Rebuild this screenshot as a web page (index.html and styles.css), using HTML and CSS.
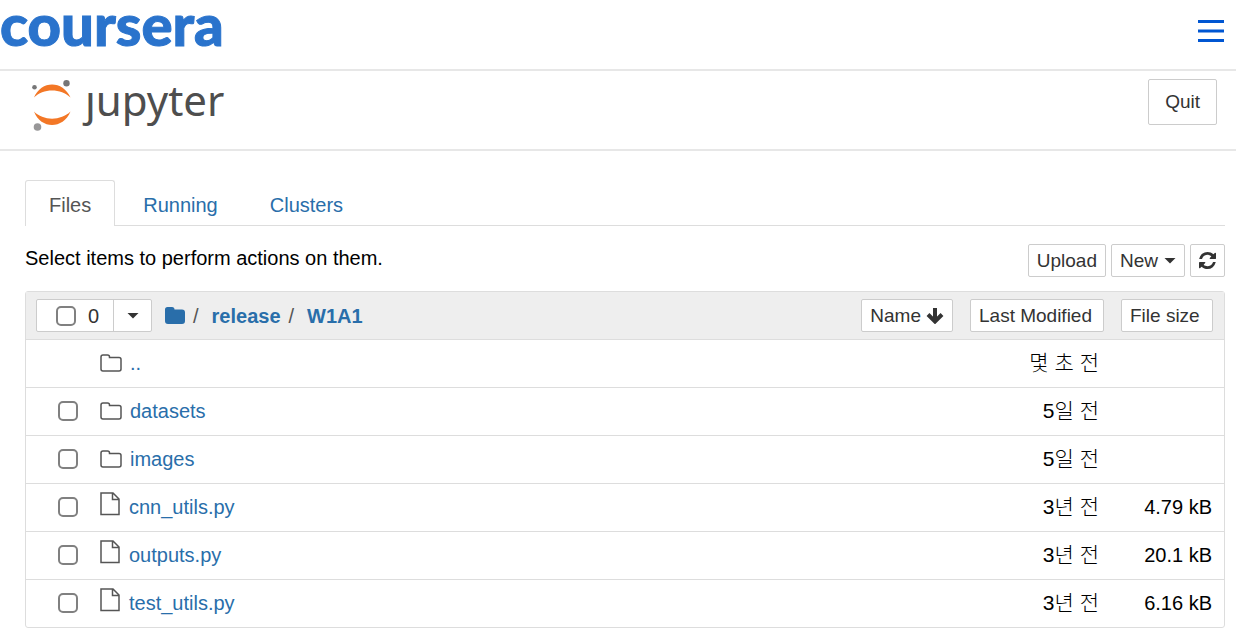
FILE: index.html
```html
<!DOCTYPE html>
<html lang="ko">
<head>
<meta charset="utf-8">
<meta name="viewport" content="width=device-width, initial-scale=1">
<title>Jupyter</title>
<link rel="stylesheet" href="styles.css">
</head>
<body>
<svg class="sprite" aria-hidden="true">
  <symbol id="folder" viewBox="0 0 22 18"><path d="M3 .9h4.500q2 0 2 2v.6H19q2 0 2 2V15q0 2-2 2H3q-2 0-2-2V3q0-2.100 2-2.100z" fill="none" stroke="#555" stroke-width="1.500"/></symbol>
  <symbol id="file" viewBox="0 0 20 24"><path d="M1 1h12l6 6v15.500H1zM12.500 1v6.500H19" fill="none" stroke="#555" stroke-width="1.500"/></symbol>
</svg>
<header class="site-header">
  <div class="coursera">coursera</div>
  <button class="menu" aria-label="Menu"><svg width="26" height="24" viewBox="0 0 26 24"><path d="M0 2.500h26M0 12h26M0 21.500h26" stroke="#0056d2" stroke-width="3"/></svg></button>
</header>
<div class="app-header">
  <div class="jupyter">
    <svg width="40" height="52" viewBox="0 0 40 52" aria-hidden="true">
      <path d="M2 18.500C9 1 31 1 38.500 18.500C29 9 11 9 2 18.500zM2 32.500C11 42 29 42 38.500 32.500C31 50.500 9 50.500 2 32.500z" fill="#f37726"/>
      <circle cx="34.500" cy="4.300" r="3.200" fill="#767677"/><circle cx="2.500" cy="8.300" r="2.300" fill="#767677"/><circle cx="5.500" cy="48" r="3.800" fill="#989798"/>
    </svg>
    <span class="jupyter-name">ȷupyter</span>
  </div>
  <button class="btn quit">Quit</button>
</div>
<main class="content">
  <nav class="tabs">
    <a class="tab active" href="#files">Files</a>
    <a class="tab" href="#running">Running</a>
    <a class="tab" href="#clusters">Clusters</a>
  </nav>
  <div class="toolbar">
    <span>Select items to perform actions on them.</span>
    <div class="actions">
      <button class="btn">Upload</button>
      <button class="btn">New<span class="caret"></span></button>
      <button class="btn" aria-label="Refresh"><svg width="17" height="17" viewBox="0 0 1536 1536" fill="#333"><path d="M1511 928q0 5-1 7-64 268-268 434.500T764 1536q-146 0-282.500-55T238 1324l-129 129q-19 19-45 19t-45-19-19-45V960q0-26 19-45t45-19h448q26 0 45 19t19 45-19 45l-137 137q71 66 161 102t187 36q134 0 250-65t186-179q11-17 53-117 8-23 30-23h192q13 0 22.500 9.500t9.500 22.500zm25-800v448q0 26-19 45t-45 19h-448q-26 0-45-19t-19-45 19-45l138-138Q969 256 768 256q-134 0-250 65T332 500q-11 17-53 117-8 23-30 23H50q-13 0-22.500-9.500T18 608v-7q65-268 270-434.500T768 0q146 0 284 55.500T1297 212l130-129q19-19 45-19t45 19 19 45z"/></svg></button>
    </div>
  </div>
  <table class="files">
    <colgroup><col><col class="col-modified"><col class="col-size"></colgroup>
    <thead>
      <tr>
        <th>
          <div class="head-row">
            <div class="selector">
              <label class="select-all"><input class="check" type="checkbox">0</label>
              <button class="select-menu" aria-label="Select"><span class="caret"></span></button>
            </div>
            <div class="crumbs">
              <a href="#root" aria-label="Root"><svg width="20" height="17" viewBox="0 0 20 17"><path d="M2.500 0H7q2.500 0 2.500 2.500H17q3 0 3 3V14q0 3-3 3H3q-3 0-3-3V2.500Q0 0 2.500 0z" fill="#296eaa"/></svg></a>
              <span class="slash">/</span><a href="#release">release</a><span class="slash">/</span><a href="#w1a1">W1A1</a>
            </div>
            <button class="btn">Name<svg class="arrow" width="18" height="16" viewBox="0 0 18 16"><path d="M9 0v13M2 6.500l7 7 7-7" fill="none" stroke="#333" stroke-width="4"/></svg></button>
          </div>
        </th>
        <th><button class="btn sort-modified">Last Modified</button></th>
        <th><button class="btn sort-size">File size</button></th>
      </tr>
    </thead>
    <tbody>
      <tr><td><div class="item parent"><svg class="icon-folder"><use href="#folder"/></svg><a href="#up">..</a></div></td><td class="modified">몇 초 전</td><td class="size"></td></tr>
      <tr><td><div class="item"><input class="check" type="checkbox" aria-label="datasets"><svg class="icon-folder"><use href="#folder"/></svg><a href="#datasets">datasets</a></div></td><td class="modified">5일 전</td><td class="size"></td></tr>
      <tr><td><div class="item"><input class="check" type="checkbox" aria-label="images"><svg class="icon-folder"><use href="#folder"/></svg><a href="#images">images</a></div></td><td class="modified">5일 전</td><td class="size"></td></tr>
      <tr><td><div class="item"><input class="check" type="checkbox" aria-label="cnn_utils.py"><svg class="icon-file"><use href="#file"/></svg><a href="#cnn">cnn_utils.py</a></div></td><td class="modified">3년 전</td><td class="size">4.79 kB</td></tr>
      <tr><td><div class="item"><input class="check" type="checkbox" aria-label="outputs.py"><svg class="icon-file"><use href="#file"/></svg><a href="#outputs">outputs.py</a></div></td><td class="modified">3년 전</td><td class="size">20.1 kB</td></tr>
      <tr><td><div class="item"><input class="check" type="checkbox" aria-label="test_utils.py"><svg class="icon-file"><use href="#file"/></svg><a href="#test">test_utils.py</a></div></td><td class="modified">3년 전</td><td class="size">6.16 kB</td></tr>
    </tbody>
  </table>
</main>
</body>
</html>
```

FILE: styles.css
```css
* { box-sizing: border-box; }
body {
  margin: 0;
  background: #fff;
  color: #000;
  font: 20px/28px "Liberation Sans", "Noto Sans CJK KR", sans-serif;
}
a { color: #296eaa; text-decoration: none; }
svg { display: block; flex: none; }
button { font: inherit; margin: 0; cursor: pointer; }
.sprite { position: absolute; width: 0; height: 0; }

.site-header, .app-header {
  display: flex;
  align-items: flex-start;
  justify-content: space-between;
  border-bottom: 2px solid #e7e7e7;
}
.site-header { height: 71px; padding: 0 12px 0 0; }
.coursera {
  color: #2a73cc;
  font: 900 58px/48px Lato, sans-serif;
  -webkit-text-stroke: 1px #2a73cc;
}
.menu { margin-top: 19px; border: 0; background: none; padding: 0; }
.app-header { height: 80px; padding: 8px 19px 0 32px; }
.jupyter { display: flex; gap: 13px; }
.jupyter-name {
  color: #4e4e4e;
  font: 42px/42px "Noto Sans", "Open Sans", sans-serif;
}

.btn {
  display: flex;
  align-items: center;
  height: 33px;
  padding: 0 8px;
  border: 1px solid #ccc;
  border-radius: 2px;
  background: #fff;
  color: #333;
  font-size: 19px;
  white-space: nowrap;
}
.quit { height: 46px; padding: 0 16px; }
.caret {
  width: 12px;
  height: 6px;
  margin-left: 6px;
  background: #333;
  clip-path: polygon(0 0, 100% 0, 50% 100%);
}

.content { padding: 29px 11px 0 25px; }
.tabs { display: flex; gap: 4px; border-bottom: 1px solid #ddd; }
.tab {
  height: 46px;
  margin-bottom: -1px;
  padding: 10px 23px;
  border: 1px solid transparent;
  border-bottom: 0;
  border-radius: 3px 3px 0 0;
}
.tab.active { border-color: #ddd; background: #fff; color: #555; }

.toolbar {
  display: flex;
  justify-content: space-between;
  padding: 18px 0 14px;
}
.actions { display: flex; gap: 5px; }

.files {
  width: 100%;
  table-layout: fixed;
  border: 1px solid #ddd;
  border-radius: 3px;
  border-spacing: 0;
}
.col-modified { width: 151px; }
.col-size { width: 120px; }
.files th, .files td { height: 48px; padding: 0; border-bottom: 1px solid #ddd; }
.files td { padding-bottom: 2px; }
.files tbody tr:last-child td { height: 47px; border-bottom: 0; }
.files th { background: #eee; font-weight: normal; }
.head-row { display: flex; align-items: center; padding-left: 10px; }
.sort-modified, .sort-size { margin-left: 17px; }
.sort-modified { width: 134px; }
.sort-size { width: 92px; }
.arrow { margin-left: 5px; }

.selector { display: flex; height: 33px; border: 1px solid #ccc; border-radius: 2px; background: #fff; color: #333; }
.select-all { display: flex; align-items: center; gap: 12px; width: 76px; padding-left: 19px; }
.select-menu { width: 38px; padding: 0 0 0 7px; border: 0; border-left: 1px solid #ccc; background: none; }
.select-menu .caret { display: block; }
.crumbs { display: flex; align-items: center; flex: 1; padding-left: 13px; font-weight: bold; }
.slash { margin: 0 13px 0 8px; color: #555; font-weight: normal; }

.check {
  appearance: none;
  flex: none;
  width: 20px;
  height: 20px;
  margin: 0;
  border: 2px solid #808080;
  border-radius: 5px;
  background: #fff;
}
.item { display: flex; align-items: center; padding-left: 32px; }
.item .check { margin-right: 22px; }
.parent { padding-left: 74px; }
.icon-folder { width: 22px; height: 18px; margin-right: 8px; }
.icon-file { width: 20px; height: 24px; margin: 0 9px 6px 0; }
.modified, .size { text-align: right; }
.files .modified { padding-right: 5px; font-size: 21px; font-weight: 300; }
.files .size { padding-right: 12px; }
```
